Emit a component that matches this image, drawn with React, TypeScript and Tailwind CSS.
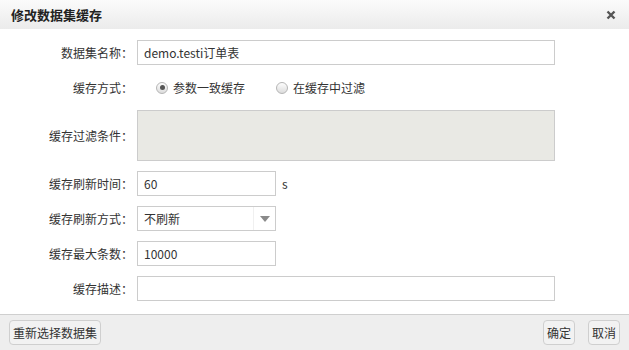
const font = { fontFamily: '"Noto Sans CJK SC", "Noto Sans", sans-serif' }

function Label({ text }: { text: string }) {
  return <div className="w-[133px] shrink-0 text-right text-[12px] text-[#333]">{text}：</div>
}

function Radio({ checked, text }: { checked?: boolean; text: string }) {
  return (
    <label className="flex items-center gap-[5px] text-[12px] text-[#333]">
      <span className="flex h-[12px] w-[12px] items-center justify-center rounded-full border border-[#b5b5b5] bg-gradient-to-b from-[#fdfdfd] to-[#dcdcdc]">
        {checked && <span className="h-[5px] w-[5px] rounded-full bg-[#555]" />}
      </span>
      {text}
    </label>
  )
}

function Field({ value, wide }: { value?: string; wide?: boolean }) {
  return (
    <div
      className={`flex h-[25px] items-center border border-[#cccccc] bg-white px-[6px] text-[12px] text-[#333] ${
        wide ? 'w-[418px]' : 'w-[139px]'
      }`}
    >
      {value}
    </div>
  )
}

function Btn({ children }: { children: string }) {
  return (
    <button className="h-[25px] rounded-[4px] border border-[#cfcfcf] bg-[#f2f2f2] px-[3px] text-[12px] text-[#333]">
      {children}
    </button>
  )
}

export default function App() {
  return (
    <div className="flex h-[350px] w-[629px] flex-col bg-white" style={font}>
      <div className="flex h-[29px] shrink-0 items-center justify-between bg-gradient-to-b from-[#fbfbfb] to-[#ebebeb] pl-[11px] pr-[13px]">
        <span className="text-[13px] font-bold text-[#222]">修改数据集缓存</span>
        <svg width="10" height="10" viewBox="0 0 10 10">
          <path d="M1.5 1.5 L8.5 8.5 M8.5 1.5 L1.5 8.5" stroke="#555" strokeWidth="2.4" />
        </svg>
      </div>

      <div className="flex flex-1 flex-col gap-[10px] pt-[11px]">
        <div className="flex items-center gap-[4px]">
          <Label text="数据集名称" />
          <Field value="demo.testi订单表" wide />
        </div>
        <div className="flex h-[25px] items-center gap-[4px]">
          <Label text="缓存方式" />
          <div className="flex items-center gap-[31px] pl-[19px]">
            <Radio checked text="参数一致缓存" />
            <Radio text="在缓存中过滤" />
          </div>
        </div>
        <div className="flex items-center gap-[4px]">
          <Label text="缓存过滤条件" />
          <div className="h-[51px] w-[418px] border border-[#cccccc] bg-[#e9e9e4]" />
        </div>
        <div className="flex items-center gap-[4px]">
          <Label text="缓存刷新时间" />
          <Field value="60" />
          <span className="pl-[2px] text-[12px] text-[#333]">s</span>
        </div>
        <div className="flex items-center gap-[4px]">
          <Label text="缓存刷新方式" />
          <div className="flex h-[25px] w-[139px] items-center border border-[#cccccc] bg-white text-[12px] text-[#333]">
            <span className="flex-1 px-[6px]">不刷新</span>
            <span className="flex h-full w-[22px] items-center justify-center border-l border-[#f0f0f0]">
              <svg width="10" height="6" viewBox="0 0 10 6">
                <path d="M0 0 H10 L5 6 Z" fill="#8a8a8a" />
              </svg>
            </span>
          </div>
        </div>
        <div className="flex items-center gap-[4px]">
          <Label text="缓存最大条数" />
          <Field value="10000" />
        </div>
        <div className="flex items-center gap-[4px]">
          <Label text="缓存描述" />
          <Field wide />
        </div>
      </div>

      <div className="flex h-[36px] shrink-0 items-center justify-between border-t border-[#cfcfcf] bg-[#eeeeee] px-[9px]">
        <Btn>重新选择数据集</Btn>
        <div className="flex gap-[13px]">
          <Btn>确定</Btn>
          <Btn>取消</Btn>
        </div>
      </div>
    </div>
  )
}
